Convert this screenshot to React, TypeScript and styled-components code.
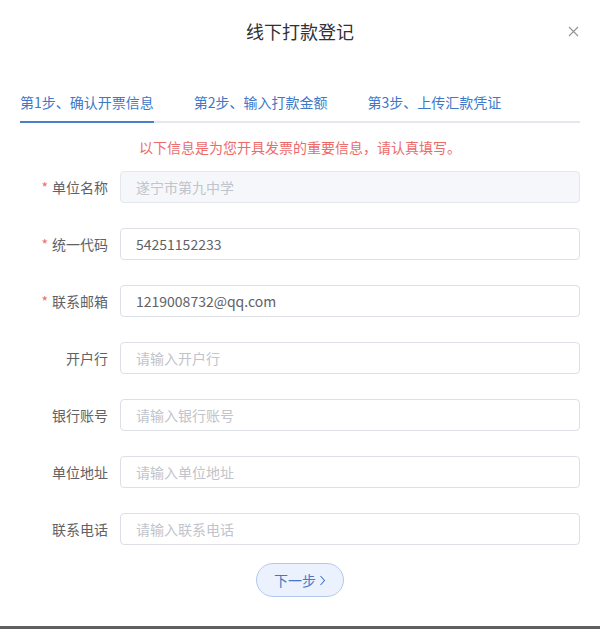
import React from "react";
import styled, { createGlobalStyle } from "styled-components";

const Global = createGlobalStyle`
  html, body { margin: 0; padding: 0; background: #ffffff; }
  body { font-family: "Noto Sans CJK SC", "Noto Sans", "Liberation Sans", sans-serif; }
  * { box-sizing: border-box; }
`;

const Page = styled.div`
  width: 600px;
  height: 629px;
  display: flex;
  flex-direction: column;
  background: #fff;
`;

const Dialog = styled.div`
  flex: 1;
  display: flex;
  flex-direction: column;
  padding: 0 20px;
  position: relative;
`;

const BottomBar = styled.div`
  height: 3px;
  background: #606060;
`;

const Header = styled.div`
  height: 83px;
  padding-top: 19px;
  display: flex;
  justify-content: center;
`;

const Title = styled.h1`
  margin: 0;
  font-size: 18px;
  font-weight: 400;
  line-height: 24px;
  color: #303133;
`;

const Close = styled.button`
  position: absolute;
  top: 24px;
  right: 20px;
  width: 14px;
  height: 14px;
  padding: 0;
  border: none;
  background: transparent;
  display: flex;
  align-items: center;
  justify-content: center;
`;

const Tabs = styled.div`
  display: flex;
  gap: 40px;
  border-bottom: 2px solid #e4e7ed;
  height: 40px;
`;

const Tab = styled.div<{ $active?: boolean }>`
  font-size: 14px;
  line-height: 38px;
  color: #3d78c9;
  position: relative;
  &::after {
    content: "";
    position: absolute;
    left: 0;
    right: 0;
    bottom: -2px;
    height: 2px;
    background: ${(p) => (p.$active ? "#4a7fce" : "transparent")};
  }
`;

const Notice = styled.p`
  margin: 14px 0 14px;
  text-align: center;
  font-size: 14px;
  line-height: 20px;
  color: #ec6b6b;
`;

const Form = styled.form`
  display: flex;
  flex-direction: column;
  gap: 25px;
`;

const Row = styled.div`
  display: flex;
  align-items: center;
`;

const Label = styled.label<{ $required?: boolean }>`
  width: 100px;
  padding-right: 12px;
  text-align: right;
  font-size: 14px;
  color: #606266;
  line-height: 32px;
  &::before {
    content: ${(p) => (p.$required ? '"*"' : '""')};
    color: #f56c6c;
    margin-right: 4px;
  }
`;

const Input = styled.input`
  flex: 1;
  height: 32px;
  border: 1px solid #dcdfe6;
  border-radius: 4px;
  padding: 0 15px;
  font-size: 14px;
  font-family: inherit;
  color: #606266;
  background: #fff;
  outline: none;
  &::placeholder { color: #c0c4cc; }
  &:disabled {
    background: #f5f7fa;
    border-color: #e4e7ed;
    color: #c0c4cc;
  }
`;

const Footer = styled.div`
  display: flex;
  justify-content: center;
  margin-top: 18px;
`;

const NextButton = styled.button`
  width: 88px;
  height: 34px;
  border-radius: 17px;
  border: 1px solid #b3c9ec;
  background: #ebf2fd;
  color: #4677c8;
  font-size: 14px;
  font-family: inherit;
  display: flex;
  align-items: center;
  justify-content: center;
  gap: 3px;
  padding: 0;
`;

const fields = [
  { label: "统一代码", required: true, value: "54251152233" },
  { label: "联系邮箱", required: true, value: "1219008732@qq.com" },
  { label: "开户行", placeholder: "请输入开户行" },
  { label: "银行账号", placeholder: "请输入银行账号" },
  { label: "单位地址", placeholder: "请输入单位地址" },
  { label: "联系电话", placeholder: "请输入联系电话" },
];

export default function App() {
  return (
    <>
      <Global />
      <Page>
        <Dialog>
          <Header>
            <Title>线下打款登记</Title>
          </Header>
          <Close aria-label="close">
            <svg width="11" height="11" viewBox="0 0 11 11">
              <path d="M1 1L10 10M10 1L1 10" stroke="#909399" strokeWidth="1.1" />
            </svg>
          </Close>
          <Tabs>
            <Tab $active>第1步、确认开票信息</Tab>
            <Tab>第2步、输入打款金额</Tab>
            <Tab>第3步、上传汇款凭证</Tab>
          </Tabs>
          <Notice>以下信息是为您开具发票的重要信息，请认真填写。</Notice>
          <Form onSubmit={(e) => e.preventDefault()}>
            <Row>
              <Label $required>单位名称</Label>
              <Input disabled value="遂宁市第九中学" readOnly />
            </Row>
            {fields.map((f) => (
              <Row key={f.label}>
                <Label $required={f.required}>{f.label}</Label>
                <Input defaultValue={f.value} placeholder={f.placeholder} />
              </Row>
            ))}
          </Form>
          <Footer>
            <NextButton type="button">
              下一步
              <svg width="7" height="11" viewBox="0 0 7 11">
                <path d="M1.5 1L5.5 5.5L1.5 10" stroke="#4677c8" strokeWidth="1.1" fill="none" />
              </svg>
            </NextButton>
          </Footer>
        </Dialog>
        <BottomBar />
      </Page>
    </>
  );
}
